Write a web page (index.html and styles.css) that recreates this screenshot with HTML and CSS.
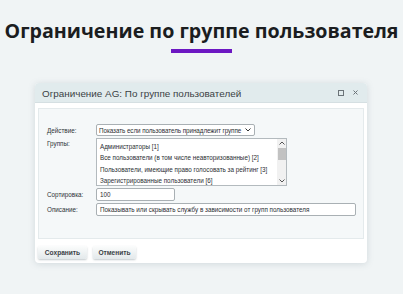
FILE: index.html
```html
<!DOCTYPE html>
<html lang="ru">
<head>
<meta charset="utf-8">
<link rel="stylesheet" href="styles.css">
</head>
<body>
<h1 class="title">Ограничение по группе пользователя</h1>
<div class="accent"></div>
<div class="dialog">
  <div class="dialog-head">
    <span class="dialog-title">Ограничение AG: По группе пользователей</span>
    <span class="head-icons">
      <span class="icon-max"></span>
      <svg class="icon-close" width="5" height="5" viewBox="0 0 5 5"><path d="M0.5 0.5L4.5 4.5M4.5 0.5L0.5 4.5" stroke="#6b7378" stroke-width="1" fill="none"/></svg>
    </span>
  </div>
  <div class="dialog-body">
    <div class="panel">
      <div class="form">
        <div class="label">Действие:</div>
        <div class="ctrl select">
          <span class="sel-text">Показать если пользователь принадлежит группе</span>
          <svg class="chev" width="6" height="4" viewBox="0 0 6 4"><path d="M0.5 0.5L3 3L5.5 0.5" stroke="#333" stroke-width="1" fill="none"/></svg>
        </div>
        <div class="label lbl-groups">Группы:</div>
        <div class="ctrl listbox">
          <div class="items">
            <div>Администраторы [1]</div>
            <div>Все пользователи (в том числе неавторизованные) [2]</div>
            <div>Пользователи, имеющие право голосовать за рейтинг [3]</div>
            <div>Зарегистрированные пользователи [6]</div>
          </div>
          <div class="scroll">
            <svg class="arr" width="6" height="4" viewBox="0 0 6 4"><path d="M0.5 3.5L3 1L5.5 3.5" stroke="#555" stroke-width="1" fill="none"/></svg>
            <div class="track"><div class="thumb"></div></div>
            <svg class="arr" width="6" height="4" viewBox="0 0 6 4"><path d="M0.5 0.5L3 3L5.5 0.5" stroke="#555" stroke-width="1" fill="none"/></svg>
          </div>
        </div>
        <div class="label">Сортировка:</div>
        <div class="ctrl input sort">100</div>
        <div class="label">Описание:</div>
        <div class="ctrl input desc">Показывать или скрывать службу в зависимости от групп пользователя</div>
      </div>
    </div>
    <div class="buttons">
      <span class="btn">Сохранить</span>
      <span class="btn">Отменить</span>
    </div>
  </div>
</div>
</body>
</html>
```

FILE: styles.css
```css
html, body {
  margin: 0;
  padding: 0;
}
body {
  width: 403px;
  height: 294px;
  background: #f0f4f5;
  overflow: hidden;
  font-family: "Liberation Sans", Arial, sans-serif;
}
.title {
  margin: 18px 0 0;
  font-family: "Open Sans", sans-serif;
  font-weight: 700;
  font-size: 19.65px;
  line-height: 26px;
  text-align: center;
  color: #1b1d1f;
  white-space: nowrap;
}
.accent {
  width: 61px;
  height: 4px;
  margin: 5px 0 0 171px;
  background: #6c17c2;
}
.dialog {
  margin: 30px 0 0 35px;
  width: 332px;
  height: 180px;
  background: #fff;
  border-radius: 4px;
  box-shadow: 0 1px 6px rgba(120, 140, 150, 0.25);
  overflow: hidden;
}
.dialog-head {
  height: 20px;
  background: #e1ebed;
  display: flex;
  align-items: center;
  justify-content: space-between;
  padding: 0 9px 0 7px;
  border-bottom: 1px solid #d5dfe2;
  box-sizing: border-box;
}
.dialog-title {
  font-size: 9.9px;
  color: #3a3f44;
  padding-top: 1px;
}
.head-icons {
  display: flex;
  align-items: center;
  gap: 9px;
}
.icon-max {
  width: 4px;
  height: 4px;
  border: 1px solid #6b7378;
}
.dialog-body {
  padding: 5px 3px 0;
}
.panel {
  height: 131px;
  box-sizing: border-box;
  background: #f5f8f9;
  border: 1px solid #e4eaec;
  padding: 15px 0 0 8px;
}
.form {
  display: grid;
  grid-template-columns: 49px auto;
  row-gap: 2px;
  align-items: start;
  justify-items: start;
}
.label {
  font-size: 6.3px;
  color: #2d3236;
  padding-top: 3px;
  white-space: nowrap;
}
.lbl-groups {
  padding-top: 2px;
}
.ctrl {
  box-sizing: border-box;
  background: #fff;
  border: 1px solid #a9b0b4;
  font-size: 6.3px;
  color: #2a2e31;
  white-space: nowrap;
}
.select {
  width: 159px;
  height: 12px;
  border-radius: 2px;
  display: flex;
  align-items: center;
  justify-content: space-between;
  padding: 0 3px 0 2px;
}
.sel-text {
  letter-spacing: -0.07px;
}
.chev {
  flex: none;
}
.listbox {
  width: 191px;
  height: 48px;
  display: flex;
  border-color: #b3babe;
}
.items {
  flex: 1;
  padding: 2px 0 0 3px;
  line-height: 11.4px;
  overflow: hidden;
}
.scroll {
  width: 9px;
  display: flex;
  flex-direction: column;
  align-items: center;
  background: #f1f1f1;
}
.arr {
  margin: 2px 0;
}
.track {
  flex: 1;
  width: 9px;
}
.thumb {
  width: 8px;
  height: 12px;
  margin: 1px auto 0;
  background: #c2c2c2;
}
.input {
  height: 13px;
  border-radius: 2px;
  padding: 0 3px;
  display: flex;
  align-items: center;
}
.sort {
  width: 79px;
}
.desc {
  width: 260px;
}
.buttons {
  display: flex;
  gap: 6px;
  margin-top: 7px;
}
.btn {
  width: 49px;
  height: 13px;
  display: flex;
  align-items: center;
  justify-content: center;
  font-size: 6.6px;
  font-weight: 700;
  color: #3b4247;
  background: linear-gradient(#fbfcfc, #e3e9eb);
  border-radius: 2px;
  box-shadow: 0 1px 2px rgba(80, 100, 110, 0.35);
}
.btn + .btn {
  width: 43px;
}
```
